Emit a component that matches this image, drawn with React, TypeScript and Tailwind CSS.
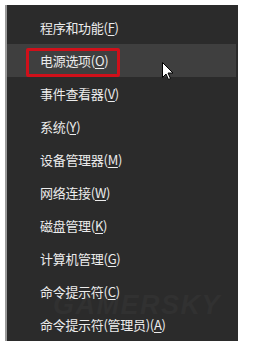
const items: { label: string; key: string }[] = [
  { label: "程序和功能", key: "F" },
  { label: "电源选项", key: "O" },
  { label: "事件查看器", key: "V" },
  { label: "系统", key: "Y" },
  { label: "设备管理器", key: "M" },
  { label: "网络连接", key: "W" },
  { label: "磁盘管理", key: "K" },
  { label: "计算机管理", key: "G" },
  { label: "命令提示符", key: "C" },
  { label: "命令提示符(管理员)", key: "A" },
];

const App = () => {
  return (
    <div className="w-[256px] h-[349px] bg-white pt-[5px] pl-[5px] font-['Microsoft_YaHei','Noto_Sans_CJK_SC',sans-serif]">
      <div className="relative w-[233px] h-[336px] bg-[#2b2b2b] border-l-2 border-[#9a9a9a] pt-[6px] overflow-hidden">
        {/* <!-- watermark --> */}
        <div className="absolute left-[46px] top-[289px] leading-[22px] text-[27px] font-black italic tracking-[1.5px] text-[#313131] font-['Liberation_Sans',sans-serif] select-none">
          GAMERSKY
        </div>
        {items.map((it, i) => (
          <div
            key={i}
            className={
              "relative z-10 h-[33px] flex items-center pl-[33px] text-[13px] text-[#ececec] tracking-[-0.3px] " +
              (i === 1 ? "bg-[#3f3f3f] mr-[2px]" : "")
            }
          >
            {i === 1 && (
              <div className="absolute left-[19px] top-[4px] w-[94px] h-[29px] border-[3px] border-[#d0101a] rounded-[2px]"></div>
            )}
            <span className="relative">
              {it.label}(<u className="underline-offset-2">{it.key}</u>)
            </span>
          </div>
        ))}
        {/* <!-- cursor --> */}
        <svg
          className="absolute z-20 left-[155px] top-[57px]"
          width="12"
          height="19"
          viewBox="0 0 12 19"
        >
          <path
            d="M0.5 0.5 L0.5 15.5 L4 12 L6.5 17.5 L8.5 16.5 L6 11 L11 11 Z"
            fill="#ffffff"
            stroke="#000000"
            strokeWidth="1"
          />
        </svg>
      </div>
    </div>
  );
};

export default App;
